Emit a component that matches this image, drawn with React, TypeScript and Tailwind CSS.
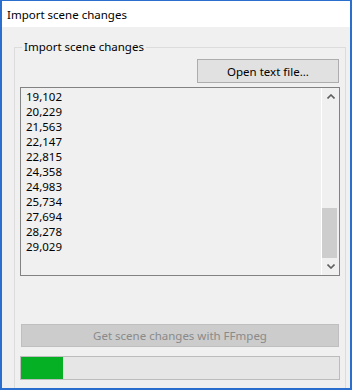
import React from "react";

const items = ["19,102","20,229","21,563","22,147","22,815","24,358","24,983","25,734","27,694","28,278","29,029"];

export default function App() {
  const font = { fontFamily: '"Noto Sans", "Open Sans", sans-serif' };
  return (
    <div className="w-[352px] h-[390px] bg-[#2b6fce] pt-px px-[2px] pb-[2px] text-[11.5px] text-black leading-[15px]" style={font}>
      <div className="flex flex-col h-full bg-[#f0f0f0]">
        <div className="h-[26px] bg-white flex items-center pl-[5px]">Import scene changes</div>
        <div className="flex-1 pt-[20px] pl-[12px] pr-[4px] overflow-hidden">
          <div className="relative h-[400px] border border-[#dcdcdc] pt-[11px] pl-[5px] pr-[5px]">
            <div className="absolute left-[7px] top-[-9px] px-[2px] bg-[#f0f0f0] leading-[16px]">Import scene changes</div>
            <div className="flex justify-end">
              <div className="w-[142px] h-[24px] mr-px bg-[#e1e1e1] border border-[#adadad] flex items-center justify-center">Open text file...</div>
            </div>
            <div className="mt-[4px] w-[320px] h-[189px] border border-[#828282] bg-[#f0f0f0] flex">
              <div className="flex-1 pl-[5px] pt-[1px]">
                {items.map((t) => (
                  <div key={t} className="h-[15px]">{t}</div>
                ))}
              </div>
              <div className="w-[18px] border-l border-white flex flex-col items-center">
                <div className="h-[17px] w-full flex items-center justify-center">
                  <svg width="8" height="5" viewBox="0 0 8 5"><path d="M0.5 4.5 L4 1 L7.5 4.5" fill="none" stroke="#606060" strokeWidth="1.6" /></svg>
                </div>
                <div className="flex-1 w-full flex flex-col">
                  <div className="flex-1" />
                  <div className="h-[50px] w-[15px] ml-0 bg-[#cdcdcd]" />
                </div>
                <div className="h-[17px] w-full flex items-center justify-center">
                  <svg width="8" height="5" viewBox="0 0 8 5"><path d="M0.5 0.5 L4 4 L7.5 0.5" fill="none" stroke="#606060" strokeWidth="1.6" /></svg>
                </div>
              </div>
            </div>
            <div className="mt-[48px] ml-px w-[318px] h-[23px] bg-[#cccccc] border border-[#bfbfbf] text-[#8a8a8a] flex items-center justify-center">Get scene changes with FFmpeg</div>
            <div className="mt-[9px] w-[320px] h-[24px] bg-[#e6e6e6] border border-[#bcbcbc]">
              <div className="h-full w-[42px] bg-[#06b025]" />
            </div>
          </div>
        </div>
      </div>
    </div>
  );
}
